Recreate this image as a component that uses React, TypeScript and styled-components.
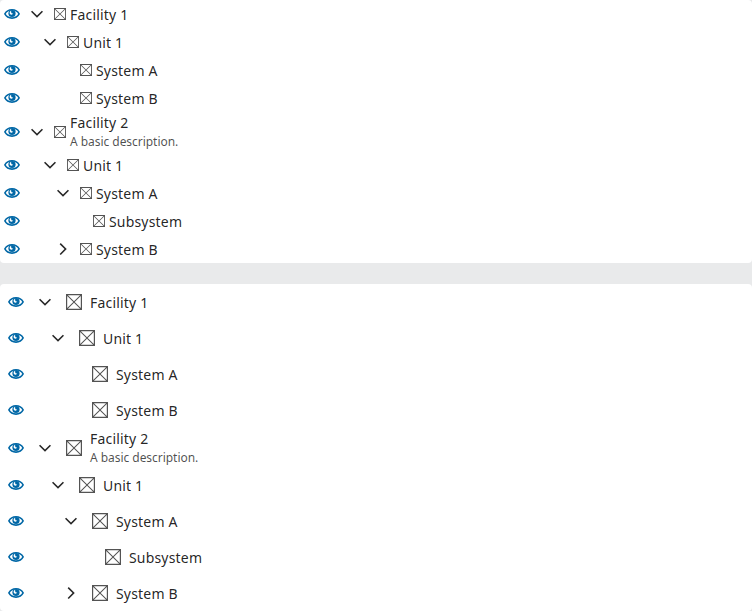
import React from 'react';
import styled, { createGlobalStyle } from 'styled-components';

type Size = 'small' | 'default';

interface NodeData {
  label: string;
  level: number;
  description?: string;
  state?: 'open' | 'closed';
}

const nodes: NodeData[] = [
  { label: 'Facility 1', level: 0, state: 'open' },
  { label: 'Unit 1', level: 1, state: 'open' },
  { label: 'System A', level: 2 },
  { label: 'System B', level: 2 },
  { label: 'Facility 2', level: 0, state: 'open', description: 'A basic description.' },
  { label: 'Unit 1', level: 1, state: 'open' },
  { label: 'System A', level: 2, state: 'open' },
  { label: 'Subsystem', level: 3 },
  { label: 'System B', level: 2, state: 'closed' },
];

const GlobalStyle = createGlobalStyle`
  *, *::before, *::after { box-sizing: border-box; }
  body {
    margin: 0;
    background: #e9eaeb;
    font-family: "Noto Sans", "Open Sans", sans-serif;
    font-size: 14px;
    line-height: 21px;
    color: rgba(0, 0, 0, 0.87);
  }
`;

const Page = styled.main`
  display: grid;
  gap: 21px;
`;

const Tree = styled.ul`
  list-style: none;
  margin: 0;
  padding: 0;
  background: #fff;
  border-radius: 4px;
`;

const Row = styled.li<{ $size: Size }>`
  display: flex;
  align-items: center;
  min-height: ${(p) => (p.$size === 'small' ? 28 : 36)}px;
  padding-left: ${(p) => (p.$size === 'small' ? 4 : 8)}px;
  cursor: pointer;
`;

const EyeIcon = styled.svg`
  width: 16px;
  height: 16px;
  flex: none;
  color: #0067a6;
`;

const Expander = styled.span<{ $size: Size; $level: number }>`
  display: flex;
  flex: none;
  width: 12px;
  margin-left: ${(p) => (p.$size === 'small' ? 11 : 15) + p.$level * 13}px;
  margin-right: ${(p) => (p.$size === 'small' ? 11 : 15)}px;
`;

const ChevronIcon = styled.svg<{ $closed: boolean }>`
  width: 12px;
  height: 12px;
  fill: #2a2a2a;
  transform: rotate(${(p) => (p.$closed ? 0 : 90)}deg);
`;

const NodeIcon = styled.svg<{ $size: Size }>`
  width: ${(p) => (p.$size === 'small' ? 12 : 16)}px;
  height: ${(p) => (p.$size === 'small' ? 12 : 16)}px;
  margin-right: ${(p) => (p.$size === 'small' ? 4 : 8)}px;
  flex: none;
  fill: #535353;
`;

const Content = styled.div`
  display: flex;
  flex-direction: column;
  min-width: 0;
`;

const Label = styled.span`
  letter-spacing: 0.18px;
  white-space: nowrap;
`;

const Description = styled.span`
  font-size: 12px;
  line-height: 18px;
  letter-spacing: -0.04px;
  color: rgba(0, 0, 0, 0.7);
  white-space: nowrap;
`;

function TreeRow({ node, size }: { node: NodeData; size: Size }) {
  return (
    <Row $size={size}>
      <EyeIcon viewBox="0 0 16 16" aria-hidden="true">
        <path
          d="M.9 7.900C2.300 5.300 4.900 3.800 8 3.800S13.700 5.300 15.100 7.900C13.700 10.600 11.100 12.100 8 12.100S2.300 10.600 .9 7.900Z"
          fill="#fff"
          stroke="currentColor"
          strokeWidth="1.600"
        />
        <circle cx="8" cy="7.500" r="3.600" fill="currentColor" />
        <path d="M7.200 4.700C5.300 5.300 5.100 7.600 6.600 8.500 7.700 9 8.800 8.500 9.200 7.600 7.700 7.800 6.700 6.500 7.200 4.700Z" fill="#fff" />
      </EyeIcon>
      <Expander $size={size} $level={node.level}>
        {node.state && (
          <ChevronIcon $closed={node.state === 'closed'} viewBox="0 0 16 16" aria-hidden="true">
            <path d="M5 0 3.500 1.500 10 8l-6.500 6.500L5 16l8-8Z" />
          </ChevronIcon>
        )}
      </Expander>
      <NodeIcon $size={size} viewBox="0 0 16 16" aria-hidden="true">
        <path
          fillRule="evenodd"
          d="M0 0v16h16V0ZM1.900 1.200h12.200L8 7.300ZM1.200 1.900 7.300 8 1.200 14.100ZM8 8.700l6.100 6.100H1.900ZM8.700 8 14.800 1.900v12.200Z"
        />
      </NodeIcon>
      <Content>
        <Label>{node.label}</Label>
        {node.description && <Description>{node.description}</Description>}
      </Content>
    </Row>
  );
}

export default function App() {
  return (
    <>
      <GlobalStyle />
      <Page>
        {(['small', 'default'] as Size[]).map((size) => (
          <Tree key={size}>
            {nodes.map((node, index) => (
              <TreeRow key={index} node={node} size={size} />
            ))}
          </Tree>
        ))}
      </Page>
    </>
  );
}
